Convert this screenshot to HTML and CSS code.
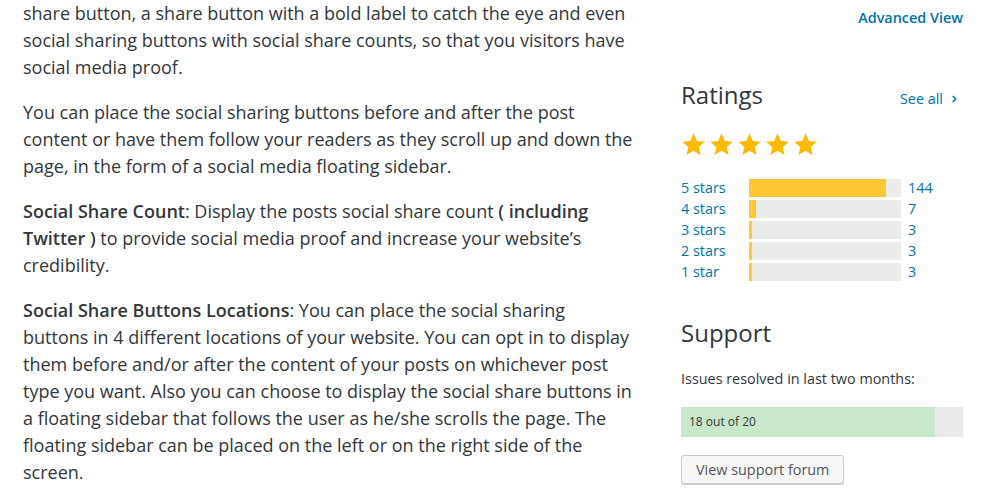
FILE: index.html
```html
<!DOCTYPE html>
<html lang="en">

<head>
  <meta charset="UTF-8">
  <meta name="viewport" content="width=device-width, initial-scale=1.0">
  <title>Social Share Buttons</title>
  <link rel="stylesheet" href="styles.css">
</head>

<body>
  <div class="page">
    <main class="description">
      <p>share button, a share button with a bold label to catch the eye and even social sharing buttons with social share counts, so that you visitors have social media proof.</p>
      <p>You can place the social sharing buttons before and after the post content or have them follow your readers as they scroll up and down the page, in the form of a social media floating sidebar.</p>
      <p><strong>Social Share Count</strong>: Display the posts social share count <strong>( including Twitter )</strong> to provide social media proof and increase your website’s credibility.</p>
      <p><strong>Social Share Buttons Locations</strong>: You can place the social sharing buttons in 4 different locations of your website. You can opt in to display them before and/or after the content of your posts on whichever post type you want. Also you can choose to display the social share buttons in a floating sidebar that follows the user as he/she scrolls the page. The floating sidebar can be placed on the left or on the right side of the screen.</p>
    </main>

    <aside class="sidebar">
      <div class="advanced">
        <a href="#">Advanced View</a>
      </div>

      <section class="ratings">
        <div class="section-head">
          <h3>Ratings</h3>
          <a href="#" class="see-all">See all
            <svg viewBox="0 0 8 10" fill="none" stroke="currentColor" stroke-width="1.8"><path d="M2 1.5 5.5 5 2 8.5"/></svg>
          </a>
        </div>
        <div class="stars">
          <svg viewBox="0 0 24 24"><path d="M12 1.5l3.2 7.1 7.6.7-5.8 5.1 1.8 7.6L12 18l-6.8 4 1.8-7.6-5.8-5.1 7.6-.7z"/></svg>
          <svg viewBox="0 0 24 24"><path d="M12 1.5l3.2 7.1 7.6.7-5.8 5.1 1.8 7.6L12 18l-6.8 4 1.8-7.6-5.8-5.1 7.6-.7z"/></svg>
          <svg viewBox="0 0 24 24"><path d="M12 1.5l3.2 7.1 7.6.7-5.8 5.1 1.8 7.6L12 18l-6.8 4 1.8-7.6-5.8-5.1 7.6-.7z"/></svg>
          <svg viewBox="0 0 24 24"><path d="M12 1.5l3.2 7.1 7.6.7-5.8 5.1 1.8 7.6L12 18l-6.8 4 1.8-7.6-5.8-5.1 7.6-.7z"/></svg>
          <svg viewBox="0 0 24 24"><path d="M12 1.5l3.2 7.1 7.6.7-5.8 5.1 1.8 7.6L12 18l-6.8 4 1.8-7.6-5.8-5.1 7.6-.7z"/></svg>
        </div>
        <ul class="counts">
          <li><a href="#">5 stars</a><span class="bar"><span class="fill" style="width: 90%"></span></span><a href="#">144</a></li>
          <li><a href="#">4 stars</a><span class="bar"><span class="fill" style="width: 4.4%"></span></span><a href="#">7</a></li>
          <li><a href="#">3 stars</a><span class="bar"><span class="fill" style="width: 2%"></span></span><a href="#">3</a></li>
          <li><a href="#">2 stars</a><span class="bar"><span class="fill" style="width: 2%"></span></span><a href="#">3</a></li>
          <li><a href="#">1 star</a><span class="bar"><span class="fill" style="width: 2%"></span></span><a href="#">3</a></li>
        </ul>
      </section>

      <section class="support">
        <h3>Support</h3>
        <p>Issues resolved in last two months:</p>
        <div class="progress">
          <div class="progress-fill" style="width: 90%">18 out of 20</div>
        </div>
        <a href="#" class="button">View support forum</a>
      </section>
    </aside>
  </div>
</body>

</html>
```

FILE: styles.css
```css
:root {
  --text-color: #32373c;
  --link-color: #0073aa;
}

body {
  margin: 0;
  font-family: "Open Sans", "Noto Sans", sans-serif;
  color: var(--text-color);
  background: #fff;
}

a {
  color: var(--link-color);
  text-decoration: none;
}

.page {
  display: flex;
  gap: 46px;
  padding: 0 22px 0 23px;
}

.description {
  flex: 1;
  font-size: 18px;
  line-height: 27px;
}

.description p {
  margin: 0 0 18px;
}

.description strong {
  font-weight: 600;
}

.sidebar {
  width: 282px;
  flex-shrink: 0;
  padding-top: 8px;
  font-size: 14.4px;
  line-height: 20px;
}

.advanced {
  text-align: right;
  font-weight: 600;
}

.sidebar h3 {
  margin: 0;
  font-size: 24px;
  line-height: 30px;
  font-weight: 400;
}

.ratings {
  margin-top: 52px;
}

.section-head {
  display: flex;
  justify-content: space-between;
  align-items: baseline;
}

.see-all {
  display: flex;
  align-items: center;
  gap: 8px;
  padding-right: 5px;
}

.see-all svg {
  width: 7px;
  height: 10px;
}

.stars {
  display: flex;
  gap: 3px;
  margin-top: 22px;
  height: 25px;
}

.stars svg {
  width: 25px;
  height: 25px;
  fill: #ffb900;
}

.counts {
  list-style: none;
  margin: 20px 0 0;
  padding: 0;
}

.counts li {
  display: flex;
  align-items: center;
  height: 21px;
}

.counts li a:first-child {
  width: 68px;
}

.bar {
  width: 152px;
  height: 18px;
  margin-right: 7px;
  background: #ebebea;
}

.fill {
  display: block;
  height: 100%;
  background: #ffc733;
}

.support {
  margin-top: 36px;
}

.support p {
  margin: 21px 0 18px;
}

.progress {
  height: 30px;
  background: #eaeaea;
}

.progress-fill {
  height: 100%;
  box-sizing: border-box;
  padding-left: 8px;
  background: #c7e8ca;
  font-size: 12px;
  line-height: 30px;
}

.button {
  display: inline-block;
  margin-top: 18px;
  padding: 0 14px;
  height: 29px;
  line-height: 27px;
  box-sizing: border-box;
  border: 1px solid #ccc;
  border-radius: 3px;
  background: #f7f7f7;
  box-shadow: 0 1px 0 #ccc;
  color: #555;
}
```
